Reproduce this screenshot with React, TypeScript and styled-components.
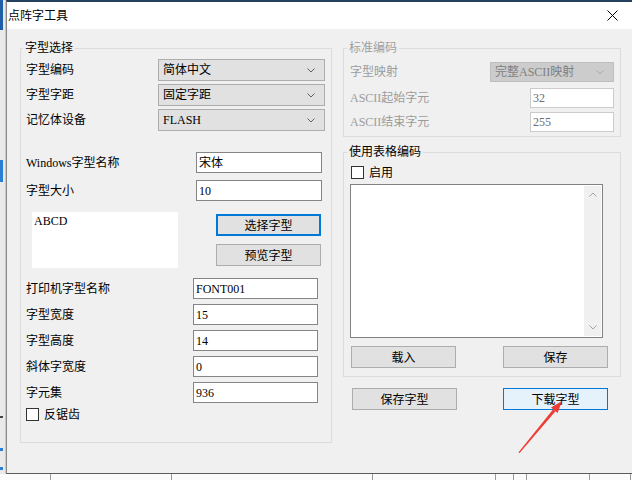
import React from 'react';
import styled, { createGlobalStyle } from 'styled-components';

const GlobalStyle = createGlobalStyle`
  html, body {
    margin: 0;
    padding: 0;
  }
  body {
    width: 632px;
    height: 480px;
    overflow: hidden;
    font-family: "Liberation Serif", "Noto Sans CJK SC", serif;
    font-size: 12px;
    color: #000;
  }
`;

const Desktop = styled.div`
  width: 632px;
  height: 480px;
  display: grid;
  grid-template-columns: 6px 626px;
  grid-template-rows: 474px 6px;
  background: #f2f2f2;
  overflow: hidden;
`;

const SideStrip = styled.div`
  display: flex;
  flex-direction: column;
  background: #e9e9e9;
  border-right: 1px solid #c8c8c8;
`;

const StripMark = styled.div<{ $h: number; $top: number; $color: string }>`
  height: ${(p) => p.$h}px;
  margin-top: ${(p) => p.$top}px;
  width: 3px;
  background: ${(p) => p.$color};
`;

const BottomStrip = styled.div`
  grid-column: 1 / 3;
  display: flex;
  background: #fbfbfb;
`;

const BottomCell = styled.div<{ $w: number }>`
  width: ${(p) => p.$w}px;
  flex: none;
  border-right: 1px solid #9a9a9a;
`;

const Window = styled.div`
  box-sizing: border-box;
  height: 474px;
  display: flex;
  flex-direction: column;
  border-top: 2px solid #23405f;
  border-left: 1px solid #8a8a8a;
  border-bottom: 1px solid #5c5c5c;
`;

const TitleBar = styled.div`
  height: 27px;
  flex: none;
  display: flex;
  align-items: center;
  justify-content: space-between;
  padding: 0 14px 0 1px;
  background: #fff;
`;

const Title = styled.span`
  line-height: 14px;
`;

const Body = styled.div`
  position: relative;
  flex: 1;
  display: flex;
  gap: 11px;
  padding: 19px 0 0 13px;
  background: #f0f0f0;
`;

const Column = styled.div`
  display: flex;
  flex-direction: column;
`;

const Group = styled.div<{ $w: number; $h: number; $mt?: number; $pl: number }>`
  box-sizing: border-box;
  width: ${(p) => p.$w}px;
  height: ${(p) => p.$h}px;
  margin-top: ${(p) => p.$mt ?? 0}px;
  display: flex;
  flex-direction: column;
  align-items: flex-start;
  padding: 0 5px 0 ${(p) => p.$pl}px;
  border: 1px solid #dcdcdc;
`;

const Legend = styled.span<{ $muted?: boolean }>`
  margin: -8px 0 0 -3px;
  padding: 0 2px;
  line-height: 14px;
  background: #f0f0f0;
  color: ${(p) => (p.$muted ? '#a0a0a0' : '#000')};
`;

const Row = styled.div<{ $h: number; $mt: number }>`
  display: flex;
  align-items: center;
  height: ${(p) => p.$h}px;
  margin-top: ${(p) => p.$mt}px;
`;

const Label = styled.span<{ $w: number; $muted?: boolean }>`
  width: ${(p) => p.$w}px;
  flex: none;
  white-space: nowrap;
  line-height: 14px;
  color: ${(p) => (p.$muted ? '#9c9c9c' : '#000')};
`;

const Select = styled.div<{ $w: number; $h: number; $disabled?: boolean }>`
  box-sizing: border-box;
  width: ${(p) => p.$w}px;
  height: ${(p) => p.$h}px;
  display: flex;
  align-items: center;
  justify-content: space-between;
  padding: 0 9px 0 4px;
  line-height: 14px;
  background: ${(p) => (p.$disabled ? '#cccccc' : '#e1e1e1')};
  border: 1px solid ${(p) => (p.$disabled ? '#bfbfbf' : '#adadad')};
  color: ${(p) => (p.$disabled ? '#7f7f7f' : '#000')};
`;

const TextBox = styled.div<{ $w: number; $h: number; $disabled?: boolean }>`
  box-sizing: border-box;
  width: ${(p) => p.$w}px;
  height: ${(p) => p.$h}px;
  display: flex;
  align-items: center;
  padding-left: 2px;
  line-height: 14px;
  background: #fff;
  border: 1px solid ${(p) => (p.$disabled ? '#cccccc' : '#858585')};
  color: ${(p) => (p.$disabled ? '#6d6d6d' : '#000')};
`;

const PreviewArea = styled.div`
  display: flex;
  align-items: flex-start;
  margin-top: 11px;
  height: 56px;
`;

const PreviewBox = styled.div`
  box-sizing: border-box;
  width: 146px;
  height: 56px;
  margin-left: 6px;
  padding: 2px 0 0 2px;
  line-height: 14px;
  background: #fff;
`;

const ButtonStack = styled.div`
  display: flex;
  flex-direction: column;
  gap: 8px;
  margin: 2px 0 0 38px;
`;

const Button = styled.div<{ $tone?: 'focus' | 'hover' }>`
  box-sizing: border-box;
  width: 105px;
  height: 22px;
  display: flex;
  align-items: center;
  justify-content: center;
  line-height: 14px;
  font-family: "Noto Sans CJK SC", sans-serif;
  background: ${(p) => (p.$tone === 'hover' ? '#e5f1fb' : '#e1e1e1')};
  border: 1px solid ${(p) => (p.$tone ? '#0078d7' : '#adadad')};
  box-shadow: ${(p) => (p.$tone === 'focus' ? 'inset 0 0 0 1px #0078d7' : 'none')};
`;

const CheckRow = styled.div<{ $mt: number; $ml: number }>`
  display: flex;
  align-items: center;
  margin: ${(p) => p.$mt}px 0 0 ${(p) => p.$ml}px;
  height: 13px;
`;

const CheckBox = styled.span`
  box-sizing: border-box;
  width: 13px;
  height: 13px;
  flex: none;
  background: #fff;
  border: 1px solid #333;
`;

const CheckLabel = styled.span`
  margin-left: 5px;
  line-height: 14px;
`;

const ListBox = styled.div`
  box-sizing: border-box;
  width: 253px;
  height: 154px;
  margin-top: 5px;
  display: flex;
  justify-content: flex-end;
  background: #fff;
  border: 1px solid #828282;
`;

const ScrollBar = styled.div`
  width: 17px;
  margin: 1px 1px 1px 0;
  display: flex;
  flex-direction: column;
  justify-content: space-between;
  background: #f0f0f0;
`;

const ScrollArrow = styled.div`
  height: 17px;
  display: flex;
  align-items: center;
  justify-content: center;
`;

const ButtonRow = styled.div<{ $mt: number; $ml: number; $gap: number }>`
  display: flex;
  gap: ${(p) => p.$gap}px;
  margin: ${(p) => p.$mt}px 0 0 ${(p) => p.$ml}px;
`;

const Annotation = styled.svg`
  position: absolute;
  left: 500px;
  top: 365px;
  pointer-events: none;
`;

const Chevron: React.FC<{ up?: boolean; color?: string }> = ({ up, color = '#606060' }) => (
  <svg width="8" height="5" viewBox="0 0 8 5">
    <polyline
      points={up ? '0.5,4.5 4,1 7.5,4.5' : '0.5,0.5 4,4 7.5,0.5'}
      fill="none"
      stroke={color}
      strokeWidth="1"
    />
  </svg>
);

const fontRows = [
  { label: '字型编码', value: '简体中文' },
  { label: '字型字距', value: '固定字距' },
  { label: '记忆体设备', value: 'FLASH' },
];

const printerRows = [
  { label: '打印机字型名称', value: 'FONT001' },
  { label: '字型宽度', value: '15' },
  { label: '字型高度', value: '14' },
  { label: '斜体字宽度', value: '0' },
  { label: '字元集', value: '936' },
];

const bottomCells = [50, 120, 200, 122, 17, 12, 62, 40];

export default function App() {
  return (
    <>
      <GlobalStyle />
      <Desktop>
        <SideStrip>
          <StripMark $h={30} $top={0} $color="#1f5fa8" />
          <StripMark $h={22} $top={130} $color="#2a7fd4" />
          <StripMark $h={2} $top={234} $color="#444" />
          <StripMark $h={3} $top={30} $color="#2a7fd4" />
          <StripMark $h={3} $top={16} $color="#2a7fd4" />
        </SideStrip>
        <Window>
          <TitleBar>
            <Title>点阵字工具</Title>
            <svg width="11" height="11" viewBox="0 0 11 11">
              <path d="M0.5 0.5 L10.5 10.5 M10.5 0.5 L0.5 10.5" stroke="#000" strokeWidth="1" />
            </svg>
          </TitleBar>
          <Body>
            <Group $w={312} $h={395} $pl={5}>
              <Legend>字型选择</Legend>
              {fontRows.map((r, i) => (
                <Row key={r.label} $h={22} $mt={i === 0 ? 4 : 3}>
                  <Label $w={132}>{r.label}</Label>
                  <Select $w={167} $h={22}>
                    <span>{r.value}</span>
                    <Chevron />
                  </Select>
                </Row>
              ))}
              <Row $h={21} $mt={21}>
                <Label $w={170}>Windows字型名称</Label>
                <TextBox $w={126} $h={21}>宋体</TextBox>
              </Row>
              <Row $h={21} $mt={7}>
                <Label $w={170}>字型大小</Label>
                <TextBox $w={126} $h={21}>10</TextBox>
              </Row>
              <PreviewArea>
                <PreviewBox>ABCD</PreviewBox>
                <ButtonStack>
                  <Button $tone="focus">选择字型</Button>
                  <Button>预览字型</Button>
                </ButtonStack>
              </PreviewArea>
              {printerRows.map((r, i) => (
                <Row key={r.label} $h={21} $mt={i === 0 ? 10 : 5}>
                  <Label $w={167}>{r.label}</Label>
                  <TextBox $w={125} $h={21}>{r.value}</TextBox>
                </Row>
              ))}
              <CheckRow $mt={5} $ml={0}>
                <CheckBox />
                <CheckLabel>反锯齿</CheckLabel>
              </CheckRow>
            </Group>

            <Column>
              <Group $w={278} $h={89} $pl={6}>
                <Legend $muted>标准编码</Legend>
                <Row $h={20} $mt={7}>
                  <Label $w={140} $muted>字型映射</Label>
                  <Select $w={124} $h={20} $disabled>
                    <span>完整ASCII映射</span>
                    <Chevron color="#a8a8a8" />
                  </Select>
                </Row>
                <Row $h={20} $mt={6}>
                  <Label $w={180} $muted>ASCII起始字元</Label>
                  <TextBox $w={84} $h={20} $disabled>32</TextBox>
                </Row>
                <Row $h={20} $mt={4}>
                  <Label $w={180} $muted>ASCII结束字元</Label>
                  <TextBox $w={84} $h={20} $disabled>255</TextBox>
                </Row>
              </Group>

              <Group $w={278} $h={225} $mt={15} $pl={6}>
                <Legend>使用表格编码</Legend>
                <CheckRow $mt={7} $ml={1}>
                  <CheckBox />
                  <CheckLabel>启用</CheckLabel>
                </CheckRow>
                <ListBox>
                  <ScrollBar>
                    <ScrollArrow>
                      <Chevron up color="#a3a3a3" />
                    </ScrollArrow>
                    <ScrollArrow>
                      <Chevron color="#a3a3a3" />
                    </ScrollArrow>
                  </ScrollBar>
                </ListBox>
                <ButtonRow $mt={8} $ml={1} $gap={47}>
                  <Button>载入</Button>
                  <Button>保存</Button>
                </ButtonRow>
              </Group>

              <ButtonRow $mt={11} $ml={9} $gap={46}>
                <Button>保存字型</Button>
                <Button $tone="hover">下载字型</Button>
              </ButtonRow>
            </Column>

            <Annotation width="70" height="65" viewBox="0 0 70 65">
              <polygon points="11.4,58.4 12.6,59 48.5,17.2 46.2,15.2" fill="#ee3b33" />
              <polygon points="55,7 50.6,18.9 44,13.5" fill="#ee3b33" />
            </Annotation>
          </Body>
        </Window>
        <BottomStrip>
          {bottomCells.map((w, i) => (
            <BottomCell key={i} $w={w} />
          ))}
        </BottomStrip>
      </Desktop>
    </>
  );
}
